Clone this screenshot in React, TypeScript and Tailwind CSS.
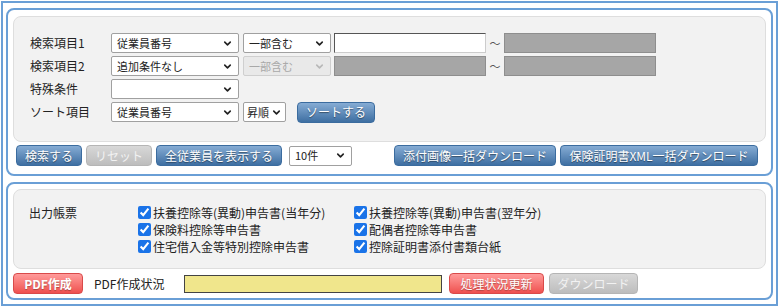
import React from 'react';
import { ChevronDown } from 'lucide-react';

const blueBtn =
  'flex h-[21px] items-center justify-center rounded-[4px] border border-[#3b6c9f] bg-linear-to-b from-[#86acd4] to-[#3e6fa2] text-[12px] text-white [text-shadow:0_1px_1px_rgba(0,0,0,0.45)]';
const redBtn =
  'flex h-[21px] items-center justify-center rounded-[4px] border border-[#d94a4a] bg-linear-to-b from-[#ff9a9a] to-[#ee4f4f] text-[12px] font-bold text-white [text-shadow:0_1px_1px_rgba(0,0,0,0.3)]';
const greyBtn =
  'flex h-[21px] items-center justify-center rounded-[4px] border border-[#b5b5b5] bg-linear-to-b from-[#d8d8d8] to-[#bdbdbd] text-[12px] text-[#f2f2f2]';

function Select({
  value,
  width,
  disabled,
  tight,
}: {
  value: string;
  width: string;
  disabled?: boolean;
  tight?: boolean;
}) {
  return (
    <div
      className={`flex h-[20px] shrink-0 items-center justify-between whitespace-nowrap rounded-[2px] border text-[11px] ${
        tight ? 'px-[3px]' : 'px-[5px]'
      } ${width} ${disabled ? 'border-[#cfcfcf] bg-[#e9e9e9] text-[#a8a8a8]' : 'border-[#a0a0a0] bg-white text-[#222]'}`}
    >
      <span className="whitespace-nowrap">{value}</span>
      <ChevronDown size={11} strokeWidth={3.5} className={`shrink-0 ${disabled ? 'text-[#b8b8b8]' : 'text-[#222]'}`} />
    </div>
  );
}

function GreyBox() {
  return <div className="h-[20px] w-[152px] border border-[#8e8e8e] bg-[#a6a6a6]" />;
}

function Check({ label }: { label: string }) {
  return (
    <div className="flex h-[17px] items-center">
      <input type="checkbox" defaultChecked className="m-0 mr-[2px] h-[13px] w-[13px] accent-[#1a73e8]" />
      <span>{label}</span>
    </div>
  );
}

export default function App() {
  return (
    <div className="h-[308px] w-[780px] bg-white pl-px pt-px font-['Meiryo','Noto_Sans_CJK_JP',sans-serif] text-[12px] text-[#222]">
      <div className="flex h-[305px] w-[777px] flex-col gap-[6px] border-2 border-[#6a9fd6] px-[3px] pt-[5px]">
        {/* 検索 */}
        <div className="flex h-[168px] flex-col rounded-[8px] border-2 border-[#6a9fd6] px-[5px] pt-[6px]">
          <div className="flex h-[126px] flex-col gap-[3px] rounded-[8px] border border-[#dedede] bg-[#f2f2f2] pl-[16px] pt-[16px]">
            <div className="flex h-[20px] items-center">
              <span className="w-[81px]">検索項目1</span>
              <Select value="従業員番号" width="w-[128px]" />
              <div className="w-[4px]" />
              <Select value="一部含む" width="w-[88px]" />
              <div className="w-[3px]" />
              <div className="h-[20px] w-[152px] border border-[#555] border-r-[#ccc] border-b-[#ccc] bg-white" />
              <span className="w-[18px] text-center text-[11px] text-[#555]">～</span>
              <GreyBox />
            </div>
            <div className="flex h-[20px] items-center">
              <span className="w-[81px]">検索項目2</span>
              <Select value="追加条件なし" width="w-[128px]" />
              <div className="w-[4px]" />
              <Select value="一部含む" width="w-[88px]" disabled />
              <div className="w-[3px]" />
              <GreyBox />
              <span className="w-[18px] text-center text-[11px] text-[#555]">～</span>
              <GreyBox />
            </div>
            <div className="flex h-[20px] items-center">
              <span className="w-[81px]">特殊条件</span>
              <Select value="" width="w-[128px]" />
            </div>
            <div className="flex h-[20px] items-center">
              <span className="w-[81px]">ソート項目</span>
              <Select value="従業員番号" width="w-[128px]" />
              <div className="w-[4px]" />
              <Select value="昇順" width="w-[43px]" tight />
              <div className="w-[11px]" />
              <button className={`${blueBtn} w-[78px]`}>ソートする</button>
            </div>
          </div>
          <div className="ml-[3px] mr-[8px] mt-[3px] flex items-center">
            <button className={`${blueBtn} w-[66px]`}>検索する</button>
            <button className={`${greyBtn} ml-[4px] w-[66px]`}>リセット</button>
            <button className={`${blueBtn} ml-[4px] w-[126px]`}>全従業員を表示する</button>
            <Select value="10件" width="ml-[7px] h-[18px] w-[63px]" />
            <div className="flex-1" />
            <button className={`${blueBtn} w-[162px]`}>添付画像一括ダウンロード</button>
            <button className={`${blueBtn} ml-[4px] w-[198px]`}>保険証明書XML一括ダウンロード</button>
          </div>
        </div>

        {/* 出力 */}
        <div className="flex h-[118px] flex-col rounded-[8px] border-2 border-[#6a9fd6] px-[5px] pt-[5px]">
          <div className="flex h-[80px] rounded-[8px] border border-[#dedede] bg-[#f2f2f2] pl-[15px] pt-[14px]">
            <span className="w-[109px] leading-[17px]">出力帳票</span>
            <div className="flex w-[216px] flex-col">
              <Check label="扶養控除等(異動)申告書(当年分)" />
              <Check label="保険料控除等申告書" />
              <Check label="住宅借入金等特別控除申告書" />
            </div>
            <div className="flex flex-col">
              <Check label="扶養控除等(異動)申告書(翌年分)" />
              <Check label="配偶者控除等申告書" />
              <Check label="控除証明書添付書類台紙" />
            </div>
          </div>
          <div className="mt-[4px] flex items-center">
            <button className={`${redBtn} w-[70px]`}>PDF作成</button>
            <span className="ml-[11px] w-[90px]">PDF作成状況</span>
            <div className="h-[18px] w-[258px] border border-[#444] bg-[#f0e68c]" />
            <button className={`${redBtn} ml-[7px] w-[95px] font-normal`}>処理状況更新</button>
            <button className={`${greyBtn} ml-[5px] w-[89px]`}>ダウンロード</button>
          </div>
        </div>
      </div>
    </div>
  );
}
